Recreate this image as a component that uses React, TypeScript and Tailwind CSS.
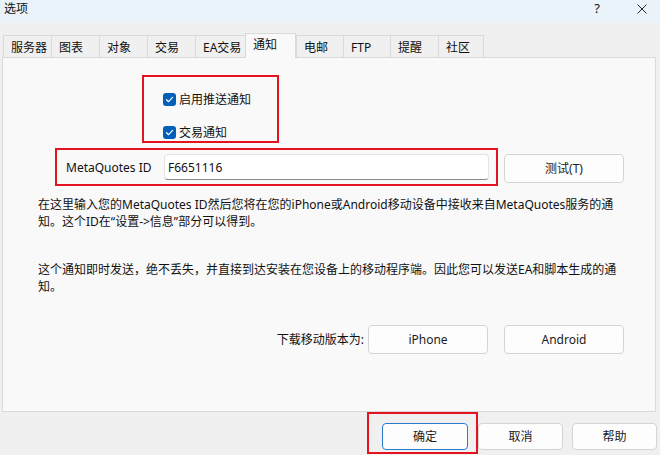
import React from "react";

const tabs: { label: string; cls: string; active?: boolean; last?: boolean }[] = [
  { label: "服务器", cls: "w-[48px]" },
  { label: "图表", cls: "w-[48px]" },
  { label: "对象", cls: "w-[48px]" },
  { label: "交易", cls: "w-[48px]" },
  { label: "EA交易", cls: "w-[50px]" },
  { label: "通知", cls: "w-[51px]", active: true },
  { label: "电邮", cls: "w-[47px]" },
  { label: "FTP", cls: "w-[47px]" },
  { label: "提醒", cls: "w-[48px]" },
  { label: "社区", cls: "w-[46px]", last: true },
];

function Check() {
  return (
    <span className="flex h-[13px] w-[13px] items-center justify-center rounded-[3px] bg-[#005fb8]">
      <svg width="9" height="9" viewBox="0 0 9 9" fill="none">
        <path d="M1.5 4.7 L3.6 6.7 L7.6 2.3" stroke="#ffffff" strokeWidth="1.2" strokeLinecap="round" strokeLinejoin="round" />
      </svg>
    </span>
  );
}

function Btn({ children, cls, primary }: { children: React.ReactNode; cls: string; primary?: boolean }) {
  return (
    <div
      className={
        "flex items-center justify-center rounded-[4px] border bg-[#fdfdfd] text-[12px] text-[#1b1b1b] " +
        (primary ? "border-[#2a7ad0] " : "border-[#d4d4d4] ") +
        cls
      }
    >
      {children}
    </div>
  );
}

export default function App() {
  return (
    <div className="h-[455px] w-[660px] overflow-hidden bg-[#f0f0f0] font-['Noto_Sans','Noto_Sans_CJK_SC',sans-serif] text-[12px] text-[#111111]">
      {/* title bar */}
      <div className="flex h-[23px] items-start bg-[#ebf3fa] pt-[0px]">
        <span className="ml-[4px] leading-[17px]">选项</span>
        <span className="ml-auto mr-[37px] leading-[17px] text-[13px]">?</span>
        <svg className="mr-[13px] mt-[4px]" width="10" height="10" viewBox="0 0 10 10">
          <path d="M0.5 0.5 L9.5 9.5 M9.5 0.5 L0.5 9.5" stroke="#222" strokeWidth="1" />
        </svg>
      </div>

      {/* tabs */}
      <div className="flex h-[34px] items-end pl-[3px]">
        {tabs.map((t) =>
          t.active ? (
            <div
              key={t.label}
              className={"relative z-10 -mb-px flex h-[25px] items-start border-x border-t border-[#d9d9d9] bg-[#f9f9f9] pl-[7px] pt-[2px] leading-[17px] " + t.cls}
            >
              {t.label}
            </div>
          ) : (
            <div
              key={t.label}
              className={
                "flex h-[22px] items-center border-l border-t border-[#dadada] bg-[#f0f0f0] pl-[7px] pt-[2px] leading-[17px] " +
                (t.last ? "border-r " : "") +
                t.cls
              }
            >
              {t.label}
            </div>
          )
        )}
      </div>

      {/* panel */}
      <div className="ml-[2px] flex h-[355px] w-[654px] flex-col border border-[#dadada] bg-[#f9f9f9]">
        <div className="ml-[139px] mt-[17px] h-[68px] w-[137px] border-2 border-[#e3141f] pl-[19px] pt-[16px]">
          <div className="flex h-[13px] items-center">
            <Check />
            <span className="ml-[3px] leading-[17px]">启用推送通知</span>
          </div>
          <div className="mt-[20px] flex h-[13px] items-center">
            <Check />
            <span className="ml-[3px] leading-[17px]">交易通知</span>
          </div>
        </div>

        <div className="mt-[5px] flex items-start">
          <div className="ml-[52px] flex h-[38px] w-[443px] items-center border-2 border-[#e3141f]">
            <span className="w-[107px] pl-[9px] leading-[17px]">MetaQuotes ID</span>
            <div className="flex h-[26px] w-[325px] items-center rounded-[4px] border border-[#e3e3e3] border-b-[#8a8a8a] bg-white pl-[3px] leading-[17px]">
              F6651116
            </div>
          </div>
          <Btn cls="ml-[6px] mt-[6px] h-[29px] w-[120px]">测试(T)</Btn>
        </div>

        <p className="ml-[35px] mt-[10px] leading-[17px]">
          在这里输入您的MetaQuotes ID然后您将在您的iPhone或Android移动设备中接收来自MetaQuotes服务的通
          <br />
          知。这个ID在“设置-&gt;信息”部分可以得到。
        </p>

        <p className="ml-[35px] mt-[31px] leading-[17px]">
          这个通知即时发送，绝不丢失，并直接到达安装在您设备上的移动程序端。因此您可以发送EA和脚本生成的通
          <br />
          知。
        </p>

        <div className="mt-[30px] flex items-center justify-end pr-[31px]">
          <span className="leading-[17px]">下载移动版本为:</span>
          <Btn cls="ml-[4px] h-[29px] w-[120px]">iPhone</Btn>
          <Btn cls="ml-[16px] h-[29px] w-[120px]">Android</Btn>
        </div>
      </div>

      {/* bottom buttons */}
      <div className="mt-[11px] flex pl-[382px]">
        <div className="relative">
          <Btn primary cls="h-[27px] w-[86px]">确定</Btn>
          <span className="pointer-events-none absolute -bottom-[4px] -left-[15px] -right-[10px] -top-[11px] border-2 border-[#e3141f]" />
        </div>
        <Btn cls="ml-[10px] h-[27px] w-[85px]">取消</Btn>
        <Btn cls="ml-[9px] h-[27px] w-[85px]">帮助</Btn>
      </div>
    </div>
  );
}
